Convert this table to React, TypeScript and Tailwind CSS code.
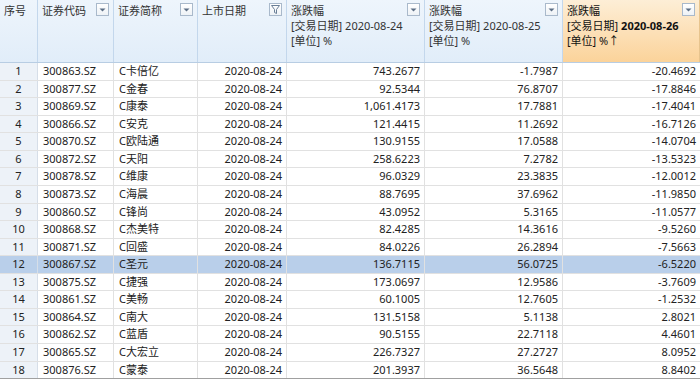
import React from "react";

const cols = "grid grid-cols-[38px_76px_84px_89px_138px_138px_137px]";

const rows: [string, string, string, string, string, string][] = [
  ["1", "300863.SZ", "C卡倍亿", "743.2677", "-1.7987", "-20.4692"],
  ["2", "300877.SZ", "C金春", "92.5344", "76.8707", "-17.8846"],
  ["3", "300869.SZ", "C康泰", "1,061.4173", "17.7881", "-17.4041"],
  ["4", "300866.SZ", "C安克", "121.4415", "11.2692", "-16.7126"],
  ["5", "300870.SZ", "C欧陆通", "130.9155", "17.0588", "-14.0704"],
  ["6", "300872.SZ", "C天阳", "258.6223", "7.2782", "-13.5323"],
  ["7", "300878.SZ", "C维康", "96.0329", "23.3835", "-12.0012"],
  ["8", "300873.SZ", "C海晨", "88.7695", "37.6962", "-11.9850"],
  ["9", "300860.SZ", "C锋尚", "43.0952", "5.3165", "-11.0577"],
  ["10", "300868.SZ", "C杰美特", "82.4285", "14.3616", "-9.5260"],
  ["11", "300871.SZ", "C回盛", "84.0226", "26.2894", "-7.5663"],
  ["12", "300867.SZ", "C圣元", "136.7115", "56.0725", "-6.5220"],
  ["13", "300875.SZ", "C捷强", "173.0697", "12.9586", "-3.7609"],
  ["14", "300861.SZ", "C美畅", "60.1005", "12.7605", "-1.2532"],
  ["15", "300864.SZ", "C南大", "131.5158", "5.1138", "2.8021"],
  ["16", "300862.SZ", "C蓝盾", "90.5155", "22.7118", "4.4601"],
  ["17", "300865.SZ", "C大宏立", "226.7327", "27.2727", "8.0952"],
  ["18", "300876.SZ", "C蒙泰", "201.3937", "36.5648", "8.8402"],
];

function DropBox() {
  return (
    <span className="absolute right-[4px] top-[3px] flex h-[13px] w-[13px] items-center justify-center border border-[#a9b9cb] bg-gradient-to-b from-white to-[#eef2f6]">
      <svg width="7" height="4" viewBox="0 0 7 4">
        <path d="M0.5 0.5 L6.5 0.5 L3.5 3.5 Z" fill="#5c6f86" />
      </svg>
    </span>
  );
}

function FunnelBox() {
  return (
    <span className="absolute right-[4px] top-[3px] flex h-[13px] w-[13px] items-center justify-center border border-[#a9b9cb] bg-gradient-to-b from-white to-[#eef2f6]">
      <svg width="9" height="9" viewBox="0 0 9 9">
        <path d="M0.5 0.5 H8.5 L5.5 4.5 V8.5 L3.5 7.5 V4.5 Z" fill="none" stroke="#6a7f97" strokeWidth="1" />
      </svg>
    </span>
  );
}

function Head({ children, icon, last }: { children: React.ReactNode; icon?: "drop" | "funnel"; last?: boolean }) {
  return (
    <div
      className={`relative h-full pl-[4px] pt-[3px] leading-[15px] border-r ${
        last
          ? "border-[#e7c48e] bg-gradient-to-b from-[#fdeed6] to-[#fbd39a] text-[#111]"
          : "border-[#c3d7ec] bg-gradient-to-b from-[#eef5fc] to-[#e1edf9] text-[#333]"
      }`}
    >
      {children}
      {icon === "drop" && <DropBox />}
      {icon === "funnel" && <FunnelBox />}
    </div>
  );
}

export default function App() {
  return (
    <div
      className="h-[382px] w-[700px] overflow-hidden bg-white text-[11px] text-[#222]"
      style={{ fontFamily: '"Noto Sans", "Noto Sans CJK SC", sans-serif' }}
    >
      <div className={`${cols} h-[63px] border-b border-[#b8cde3]`}>
        <Head>序号</Head>
        <Head icon="drop">证券代码</Head>
        <Head icon="drop">证券简称</Head>
        <Head icon="funnel">上市日期</Head>
        <Head icon="drop">
          <div>涨跌幅</div>
          <div>[交易日期] 2020-08-24</div>
          <div>[单位] %</div>
        </Head>
        <Head icon="drop">
          <div>涨跌幅</div>
          <div>[交易日期] 2020-08-25</div>
          <div>[单位] %</div>
        </Head>
        <Head icon="drop" last>
          <div>涨跌幅</div>
          <div>
            [交易日期] <span className="font-bold">2020-08-26</span>
          </div>
          <div>[单位] %↑</div>
        </Head>
      </div>
      <div className="flex h-[316px] flex-col border-b border-[#a0a0a0]">
        {rows.map((r) => {
          const sel = r[0] === "12";
          return (
            <div
              key={r[0]}
              className={`${cols} flex-1 items-center border-b border-[#e1e1e1] last:border-b-0 ${
                sel ? "bg-[#b9cfea]" : ""
              }`}
            >
              <div className={`flex h-full items-center justify-center border-r border-[#d6dee8] ${sel ? "" : "bg-[#edf2f8]"}`}>
                {r[0]}
              </div>
              <div className="flex h-full items-center border-r border-[#e1e1e1] pl-[5px]">{r[1]}</div>
              <div className="flex h-full items-center border-r border-[#e1e1e1] pl-[5px]">{r[2]}</div>
              <div className="flex h-full items-center justify-end border-r border-[#e1e1e1] pr-[4px]">2020-08-24</div>
              <div className="flex h-full items-center justify-end border-r border-[#e1e1e1] pr-[4px]">{r[3]}</div>
              <div className="flex h-full items-center justify-end border-r border-[#e1e1e1] pr-[4px]">{r[4]}</div>
              <div className="flex h-full items-center justify-end pr-[4px]">{r[5]}</div>
            </div>
          );
        })}
      </div>
    </div>
  );
}
